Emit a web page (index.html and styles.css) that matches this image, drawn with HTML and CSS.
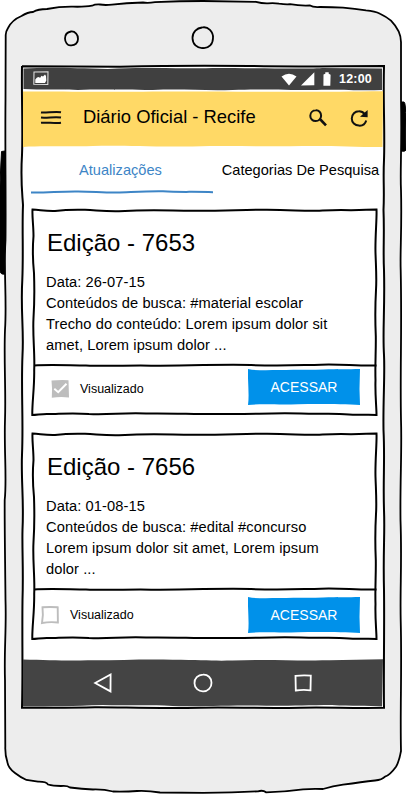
FILE: index.html
```html
<!DOCTYPE html>
<html lang="pt-BR">
<head>
<meta charset="utf-8">
<title>Diário Oficial - Recife</title>
<link rel="stylesheet" href="styles.css">
</head>
<body>
<svg width="0" height="0" class="defs" aria-hidden="true">
  <symbol id="card-frame" viewBox="0 0 348 210">
    <path d="M1.500 1.500C10 2 14 3.300 24 3C36 1.500 44 1.500 54 1.800C68 2.500 74 3.500 88 3.200C112 2 124 2 142 2.600C190 3.600 210 1.400 236 1.800C262 2 272 3.200 286 2.800C302 2 306 1.600 320 2.200C330 1.800 338 1.500 345.500 1.500C346 10 344 30 344.500 45C345 60 345.800 70 345 82C344 100 344 110 344.800 128C345 145 344 155 344.500 172C344 188 345.500 198 345.500 207C336 206 328 207.500 318 206.500C300 205 290 206.500 270 205.500C240 204.500 222 206.500 195 206C165 206.500 145 205 115 205.500C92 204.500 78 207 58 206C40 204.500 28 206 18 206C12 205.500 6 207 1.300 207C1 195 3.500 180 3.200 162C4 145 1.500 128 2.500 110C3.500 95 3.500 80 3 65C1.500 50 1.500 40 2.500 28C2.500 18 1 8 1.500 1.500Z" fill="#fff"/>
    <path d="M3 157.500C20 156.500 40 157.500 55 157.500C75 158.500 100 157.200 120 157.700C150 157.800 190 156.200 220 157C250 158.500 270 157 290 156.700C310 156 325 158 345.500 157.500"/>
  </symbol>
  <symbol id="button-face" viewBox="0 0 112 36">
    <path d="M0 0C6 1.500 12 .8 18 1.300C35 .5 55 1.200 75 .5C90 0 100 .4 112 0L111.500 20L112 36C95 35 70 34.800 50 35.200C30 36 15 34.500 0 36C1.500 25-.5 12 0 0Z"/>
  </symbol>
</svg>

<main class="phone">
  <svg class="phone-shell" viewBox="0 0 406 794" aria-hidden="true">
    <path class="key" d="M5 151L1.500 151.500Q-.5 180 0 210L0 270Q0 275 5 274Z"/>
    <path class="key" d="M401 102L404 102Q406 103 405.500 120L406 150Q405 152 401 151Z"/>
    <path class="shell" d="M5.700 35Q6 31 8 28Q12 20 21.500 16Q28 12 33 12Q38 9 47 9Q60 6.500 73 6.700Q85 7 92 5.700Q95 4.200 100 4.500Q105 5.400 112 4.600Q126 3 143 2.500Q148 3.200 155 2.200Q180 1 203 1L256 1.800Q262 3.500 268 3.300Q274 2.600 279 3.700Q285 4.500 290 4.200Q300 6 310 5.500Q313 7.500 320 7Q332 7 343 7.700Q355 9 366 10.300Q375 11 380 13.700Q387 17 391 20.700C398 28 401 36 401 42L401 100C402 150 400 170 401 190C402 230 400 250 400.700 270C402 330 400 370 401 420C402 450 400 480 400.500 520C402 560 400 590 400.700 620C402 670 400 710 401 751Q399 762 396 766.700Q390 775 385 776.700Q382 780 375 780.500Q362 782 343 784.700Q333 786 323 789Q313 788.500 303 789.300Q285 791.800 266 792.300Q263 789.800 258 791.300Q235 792.500 203 792.800L160 792.500Q148 790.500 137 791Q126 791.800 113 791.500Q104 789.200 93 789.500Q82 789 70 787.500Q67 785.300 61 786Q53 786 48 784.500Q46 781.500 38 781.700L26.500 780Q20 777 15 773Q8 768 7.300 761.700Q5 755 5.300 746.500L5 680C4 650 6.500 630 5.500 600C5 550 4.500 520 4.700 500C7 480 4 450 5 420C6 390 3.800 360 5 330C7 300 3.500 270 5.500 240C6 200 5 150 5.500 100Z"/>
    <path class="outline" d="M71 31.500C75 31 78.500 35 78 39C78 43 75 45.500 71 45.300C67.500 46 65 42 65 38.500C65 34 68 32 71 31.500Z"/>
    <path class="outline" d="M202 27.500C208 26 213.500 32 213 38C213 44 209 48.500 203 48C197 48.500 192.500 44 192.500 38C192.500 32 197 28 202 27.500Z"/>
    <path class="glass" d="M22 66.200L120 66.700C170 65.500 220 65.500 250 66C300 67 340 66 384 66C383 100 385 130 384 160C383 180 384.500 190 383.500 210C384.500 235 383 250 384 270C385 310 382.500 330 384 355C385 375 383 400 383.500 430C385 460 383 480 384 510C385 535 383 550 384 590C384.500 630 383.500 670 384 707.800C350 708.500 330 707 300 707.700C260 708.500 230 707 200 707.700C150 708.500 120 707 95 707.200C70 708 45 707.500 22 707.800C23 670 22 640 22.500 600C23.500 570 22 550 22.500 530C24 500 21 480 22 455C23.500 420 21 390 22.500 355C24 330 20.500 310 22.300 280C23.500 250 22 230 23 205C22 190 20.500 180 22 155C23 130 21.500 100 22 66Z"/>
  </svg>

  <div class="screen">
    <header class="status-bar">
      <svg class="bar-face" viewBox="0 0 361 25" preserveAspectRatio="none" aria-hidden="true"><path d="M.5 1.500C25 0 50 1 85 2C120 0 150 2 190 1C230 1 280 2.500 300 1L360 1.500V24C335 25 320 23 290 24C260 24 240 22.500 210 24C180 25 160 22.500 130 24C100 24 80 23 55 24C30 23 20 24 .5 23Z"/></svg>
      <svg class="photo-icon" viewBox="0 0 16 15" aria-hidden="true"><path d="M1 1L15 .8L14.800 13.500L.8 13.200Z" fill="none" stroke="#ddd" stroke-width="1.100"/><path d="M2.300 12V8.500L4 6.500L6 6L7 7L8.500 4.800L10 5.500L12 3.500L13 5L13.300 9.500L12 12Z" fill="#fff"/></svg>
      <div class="status-icons">
        <svg class="wifi-icon" viewBox="0 0 16 13" aria-hidden="true"><path d="M.5 3.500Q8-1.800 15.500 3.500L8 12.500Z"/></svg>
        <svg class="signal-icon" viewBox="0 0 14 14" aria-hidden="true"><path d="M0 13.500L13.300 .3V13.300Z"/></svg>
        <svg class="battery-icon" viewBox="0 0 8 14" aria-hidden="true"><path d="M2.300.2H5.700V1.700L7.600 2.800L7.300 13.700H.4L.5 2.500L2.300 1.700Z"/></svg>
        <span class="clock">12:00</span>
      </div>
    </header>

    <div class="app-bar">
      <svg class="bar-face bar-yellow" viewBox="0 0 361 56" preserveAspectRatio="none" aria-hidden="true"><path d="M0 .5C50 0 80 1.500 130 .5C200 0 260 1.500 361 .3L360.500 56C330 56 310 54.500 280 55C240 56 210 54 170 55.500C120 56 100 54 70 55C40 56 20 54.500 0 56Z"/></svg>
      <svg class="menu-icon" viewBox="0 0 22 14" aria-hidden="true"><path d="M1 2.500C6 3.100 15 1.300 21 2.300M1 7.600C7 8.200 15 6.600 21 7.600M1 12.800C6 12.100 15 13.600 21 12.800"/></svg>
      <h1 class="app-title">Diário Oficial - Recife</h1>
      <svg class="search-icon" viewBox="0 0 18 18" aria-hidden="true"><path d="M6.800 1.300C9.800 1 12.200 3.600 12.100 6.700C12.100 9.800 9.500 12.200 6.600 12.100C3.500 12.100 1.200 9.700 1.300 6.800C1.300 3.700 3.700 1.400 6.800 1.300Z"/><path d="M10.700 10.800L11.900 11L17 16.400" stroke-width="2.600"/></svg>
      <svg class="refresh-icon" viewBox="0 0 18 18" aria-hidden="true"><path d="M16.200 11.500C15.300 14.700 12.500 16.900 8.900 16.600C5 16.500 1.700 13.500 1.800 9.500C1.900 5.300 5 2.300 8.800 2.300C11.500 2.200 13.200 3.200 14.700 5.200"/><path class="tip" d="M17.600 1V8.300L10 7.800Z"/></svg>
    </div>

    <nav class="tabs">
      <a class="tab tab-active">Atualizações
        <svg class="tab-line" viewBox="0 0 182 4" aria-hidden="true"><path d="M0 2.600C18 2.800 26 1.500 44 1.500C60 1.200 70 2.800 86 2.600C100 2.200 115 1 132 1.300C150 2.500 164 1.300 182 2.300"/></svg>
      </a>
      <a class="tab tab-wide">Categorias De Pesquisa</a>
    </nav>

    <section class="feed">
      <article class="card">
        <svg class="card-frame"><use href="#card-frame"/></svg>
        <div class="card-body">
          <h2>Edição - 7653</h2>
          <p>Data: 26-07-15<br>Conteúdos de busca: #material escolar<br>Trecho do conteúdo: Lorem ipsum dolor sit<br>amet, Lorem ipsum dolor ...</p>
        </div>
        <footer class="card-foot card-foot-seen">
          <svg class="check" viewBox="0 0 20 20" aria-hidden="true"><path d="M1.500 1.500Q10 .8 18.500 1.200L19 18.500Q10 17.500 1.800 18.800Q2.500 10 1.500 1.500Z" fill="#bdbdbd"/><path d="M4.300 9.800L8.200 13.200L16.500 4.800" fill="none" stroke="#fff" stroke-width="2"/></svg>
          <span class="label">Visualizado</span>
          <button class="open"><svg class="open-face"><use href="#button-face"/></svg><span>ACESSAR</span></button>
        </footer>
      </article>

      <article class="card">
        <svg class="card-frame"><use href="#card-frame"/></svg>
        <div class="card-body">
          <h2>Edição - 7656</h2>
          <p>Data: 01-08-15<br>Conteúdos de busca: #edital #concurso<br>Lorem ipsum dolor sit amet, Lorem ipsum<br>dolor ...</p>
        </div>
        <footer class="card-foot card-foot-new">
          <svg class="check" viewBox="0 0 20 20" aria-hidden="true"><path d="M2.500 2.300Q10 1.800 17.700 2.300L17.900 17.500Q10 16.500 2 18Q3.500 10 2.500 2.300Z" fill="none" stroke="#bdbdbd" stroke-width="1.900"/></svg>
          <span class="label">Visualizado</span>
          <button class="open"><svg class="open-face"><use href="#button-face"/></svg><span>ACESSAR</span></button>
        </footer>
      </article>
    </section>

    <nav class="nav-bar">
      <svg class="bar-face bar-nav" viewBox="0 0 361 48" preserveAspectRatio="none" aria-hidden="true"><path d="M0 .5C25 1 45 2 65 1.300C95 1.500 120 0 150 .8C180 1 190 2 210 1.500C245 0 275 2 300 1.200C320 1.500 340 .5 361 .3L360 47.500C345 46.500 330 47.500 310 46C280 46 260 47.500 235 46.500C200 46 170 48 150 47C120 45.500 100 47 80 46C50 47 30 47.500 0 47.500Z"/></svg>
      <svg class="nav-icon" viewBox="0 0 20 20" aria-hidden="true"><path d="M17.600 1.500L17.500 18.400L2.200 10Z"/></svg>
      <svg class="nav-icon" viewBox="0 0 20 20" aria-hidden="true"><path d="M10 1.600C14.600 1.200 18.700 5 18.500 9.800C18.700 14.600 14.800 18.300 10.300 18.300C5.500 18.500 1.500 15 1.500 10.300C1.200 5.500 5 1.800 10 1.600Z"/></svg>
      <svg class="nav-icon" viewBox="0 0 20 20" aria-hidden="true"><path d="M2.500 2.800Q10 2 17.800 2.600L17.500 17.300Q10 16.500 2.800 17.500Z"/></svg>
    </nav>
  </div>
</main>
</body>
</html>
```
FILE: styles.css
```css
* { box-sizing: border-box; }

body {
  margin: 0;
  background: #fff;
  font-family: "Liberation Sans", Arial, sans-serif;
  color: #000;
  overflow: hidden;
}

.defs { position: absolute; }

.phone {
  position: relative;
  width: 406px;
  height: 794px;
  padding: 67px 23px 87px;
}

.phone-shell {
  position: absolute;
  inset: 0;
  width: 406px;
  height: 794px;
}

.shell { fill: #ededed; stroke: #000; stroke-width: 1.8; }
.key { fill: #000; stroke: #000; stroke-width: 1; }
.outline { fill: none; stroke: #000; stroke-width: 1.8; }
.glass { fill: #fff; stroke: #000; stroke-width: 2; }

.screen {
  position: relative;
  display: flex;
  flex-direction: column;
  width: 360px;
  height: 640px;
}

.bar-face {
  position: absolute;
  inset: 0;
  width: 100%;
  height: 100%;
  fill: #404040;
}
.bar-yellow { fill: #ffd966; }
.bar-nav { fill: #444; }

.status-bar {
  position: relative;
  display: flex;
  align-items: center;
  justify-content: space-between;
  height: 24px;
  padding: 0 11px 0 10px;
}
.status-bar > :not(.bar-face) { position: relative; }

.photo-icon { width: 16px; height: 15px; margin-top: -1px; }

.status-icons { display: flex; align-items: center; fill: #fff; }
.wifi-icon { width: 16px; height: 13px; margin-right: 4px; }
.signal-icon { width: 14px; height: 14px; margin-right: 8px; }
.battery-icon { width: 8px; height: 14px; margin-right: 8px; }
.clock {
  color: #fff;
  font-size: 12.5px;
  font-weight: bold;
  letter-spacing: 0.2px;
}

.app-bar {
  position: relative;
  display: flex;
  align-items: center;
  height: 56px;
  padding: 0 15px 4px 17px;
}
.app-bar > :not(.bar-face) { position: relative; }

.menu-icon {
  width: 22px;
  height: 14px;
  margin-right: 21px;
  fill: none;
  stroke: #111;
  stroke-width: 2;
}

.app-title {
  flex: 1;
  margin: 0;
  font-size: 18.4px;
  font-weight: normal;
}

.search-icon, .refresh-icon {
  width: 18px;
  height: 18px;
  margin-top: 2px;
  fill: none;
  stroke: #111;
  stroke-width: 2;
}
.search-icon { margin-right: 23px; }
.refresh-icon .tip { fill: #111; stroke: none; }

.tabs { display: flex; height: 61px; padding-left: 8px; }
.tab {
  position: relative;
  width: 180px;
  padding-top: 13px;
  font-size: 14.6px;
  line-height: 20px;
  text-align: center;
  white-space: nowrap;
}
.tab-wide { padding-left: 11px; }
.tab-active { padding-left: 3px; color: #3d85c6; }
.tab-line {
  position: absolute;
  left: 0;
  top: 43px;
  width: 182px;
  height: 4px;
  fill: none;
  stroke: #3d85c6;
  stroke-width: 2;
}

.feed {
  display: flex;
  flex-direction: column;
  gap: 14px;
  padding-left: 8px;
}

.card { position: relative; height: 210px; width: 348px; }
.card-frame {
  position: absolute;
  left: -0.5px;
  top: 0;
  width: 348px;
  height: 210px;
  fill: none;
  stroke: #000;
  stroke-width: 2;
}

.card-body { position: relative; height: 158px; padding: 21px 0 0 15px; }
.card-body h2 {
  margin: 0 0 15px 1px;
  font-size: 24px;
  line-height: 28px;
  font-weight: normal;
}
.card-body p {
  margin: 0;
  font-size: 14.67px;
  line-height: 21px;
  letter-spacing: 0.08px;
  white-space: nowrap;
}

.card-foot {
  position: relative;
  display: flex;
  align-items: center;
  height: 46px;
  padding-right: 19px;
}
.card-foot-seen { padding-left: 19px; }
.card-foot-new { padding-left: 9px; margin-top: 2px; }

.check { width: 20px; height: 20px; margin-right: 10px; }
.label { flex: 1; font-size: 12.5px; }

.open {
  position: relative;
  width: 112px;
  height: 36px;
  margin-top: -5px;
  padding: 0;
  border: 0;
  background: none;
  color: #fff;
  font: 14px "Liberation Sans", Arial, sans-serif;
}
.card-foot-new .open { margin-top: -1px; }
.open-face {
  position: absolute;
  inset: 0;
  width: 112px;
  height: 36px;
  fill: #0091ea;
}
.open span { position: relative; }

.nav-bar {
  position: relative;
  display: flex;
  align-items: center;
  justify-content: center;
  gap: 80px;
  height: 48px;
  margin-top: auto;
}
.nav-icon {
  position: relative;
  width: 20px;
  height: 20px;
  fill: none;
  stroke: #fff;
  stroke-width: 1.8;
}
```
